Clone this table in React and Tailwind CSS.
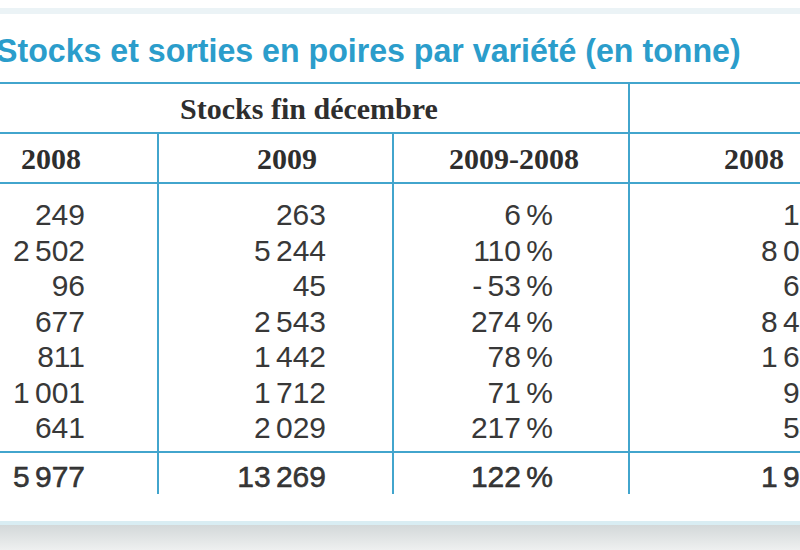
import React from 'react';

const rows = [
  ['249', '263', '6 %', '127'],
  ['2 502', '5 244', '110 %', '8 060'],
  ['96', '45', '- 53 %', '603'],
  ['677', '2 543', '274 %', '8 490'],
  ['811', '1 442', '78 %', '1 605'],
  ['1 001', '1 712', '71 %', '956'],
  ['641', '2 029', '217 %', '542'],
];
const totals = ['5 977', '13 269', '122 %', '1 995'];

// right padding of each column so the numbers line up with the picture
const pads = ['pr-[72px]', 'pr-[66px]', 'pr-[75px]', 'pr-[45px]'];
const cols = 'grid grid-cols-[167px_235px_236px_250px]';
const line = 'border-[#42a5cd]';
const serif = "font-['Liberation_Serif',serif] font-bold text-[30px] text-[#2e2e2e]";
const sans = "font-['Liberation_Sans',sans-serif] text-[30px] text-[#383838] [word-spacing:-3px]";

export default function App() {
  return (
    <div className="w-[800px] h-[550px] overflow-hidden bg-white flex flex-col">
      <div className="h-[8px] shrink-0" />
      <div className="h-[6px] shrink-0 bg-[#ebf3f6]" />

      {/* title */}
      <div className="h-[68px] shrink-0 pt-[14px]">
        <h1 className="-ml-[4px] origin-left scale-x-[0.945] whitespace-nowrap leading-[44px] text-[34px] font-bold text-[#2b9dcb] font-['Liberation_Sans',sans-serif]">
          Stocks et sorties en poires par variété (en tonne)
        </h1>
      </div>

      <div className={`-ml-[10px] w-[888px] shrink-0 border-t-2 ${line}`}>
        {/* group header */}
        <div className={`${cols} h-[50px] border-b-2 ${line}`}>
          <div className={`col-span-3 flex items-center justify-center ${serif}`}>Stocks fin décembre</div>
          <div className={`border-l-2 ${line}`} />
        </div>

        {/* years */}
        <div className={`${cols} h-[50px] border-b-2 ${line} ${serif}`}>
          <div className="flex items-center justify-center pr-[45px]">2008</div>
          <div className={`flex items-center justify-center pl-[23px] border-l-2 ${line}`}>2009</div>
          <div className={`flex items-center justify-center pl-[6px] border-l-2 ${line}`}>2009-2008</div>
          <div className={`flex items-center justify-center border-l-2 ${line}`}>2008</div>
        </div>

        {/* data */}
        <div className={`${cols} h-[269px] border-b-2 ${line} ${sans}`}>
          {[0, 1, 2, 3].map((c) => (
            <div key={c} className={`flex flex-col pt-[13px] text-right whitespace-nowrap ${pads[c]} ${c > 0 ? 'border-l-2 ' + line : ''}`}>
              {rows.map((r, i) => (
                <div key={i} className="h-[35.5px] leading-[35.5px]">{r[c]}</div>
              ))}
            </div>
          ))}
        </div>

        {/* totals */}
        <div className={`${cols} h-[41px] ${sans} text-[28px] text-[#1f1f1f] [word-spacing:-3px] [-webkit-text-stroke:0.5px_#1f1f1f]`}>
          {totals.map((t, c) => (
            <div key={c} className={`pt-[6px] leading-[35px] text-right whitespace-nowrap ${pads[c]} ${c > 0 ? 'border-l-2 ' + line : ''}`}>
              {t}
            </div>
          ))}
        </div>
      </div>

      <div className="h-[27px] shrink-0" />
      <div className="h-[4px] shrink-0 bg-[#d9edf3]" />
      <div className="flex-1 bg-gradient-to-b from-[#d3d8d9] to-[#eef0f0]" />
    </div>
  );
}
